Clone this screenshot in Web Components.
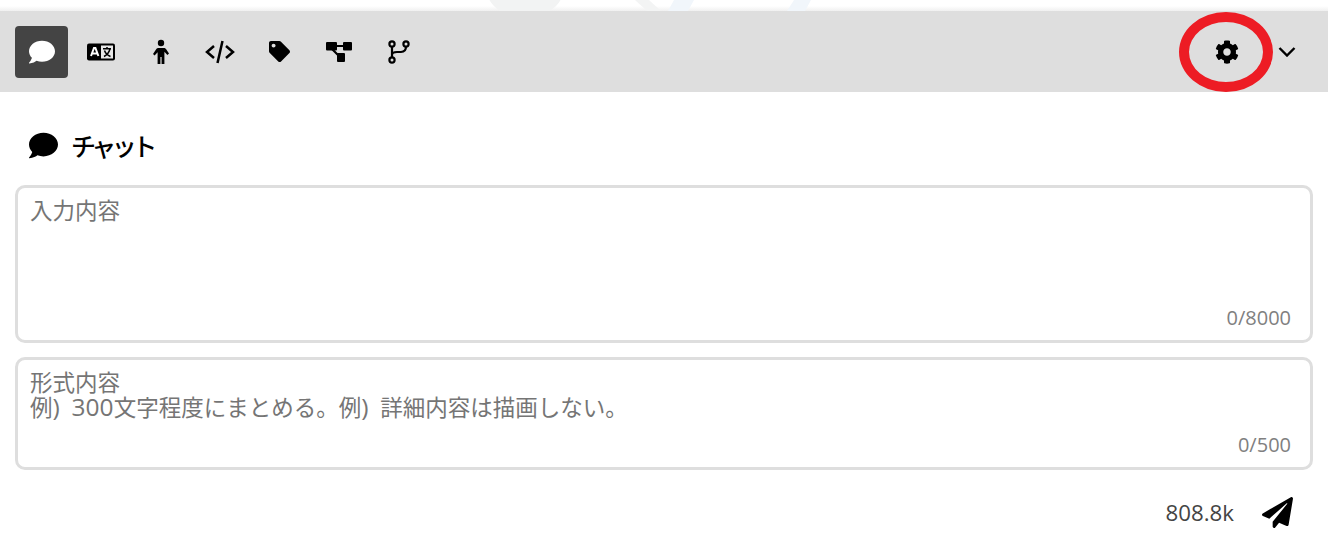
<!DOCTYPE html>
<html lang="ja">
<head>
<meta charset="utf-8">
<title>チャット</title>
<style>
html,body{margin:0;padding:0;background:#fff}
body{font-family:"Open Sans","Noto Sans CJK JP",sans-serif}
/* latin inside the placeholder runs a bit wider than the kana */
.lat{font-size:24.5px;word-spacing:5.5px;line-height:0}
</style>
</head>
<body>
<app-shell>
  <tool-bar slot="bar">
    <tool-btn active><svg viewBox="0 0 512 512" width="26" height="26" fill="#fff"><path d="M256 32C114.600 32 0 125.100 0 240c0 49.600 21.400 95 57 130.700C44.500 421.100 2.700 466 2.200 466.500c-2.200 2.300-2.800 5.700-1.500 8.700S4.800 480 8 480c66.300 0 116-31.800 140.600-51.400 32.700 12.300 69 19.400 107.400 19.400 141.400 0 256-93.100 256-208S397.400 32 256 32z"/></svg></tool-btn>
    <tool-btn><svg viewBox="0 0 30 20" width="30" height="20"><rect x="1" y="1.500" width="28" height="17" rx="2" fill="#000"/><rect x="15" y="3.500" width="12" height="13" fill="#e8e8e8"/><path d="M5 14l3-8h1.400l3 8M6.300 11.500h5.300" fill="none" stroke="#fff" stroke-width="2"/><path d="M17 6.800h8M21 5v2M18 14.500c3-1.500 5-4 6-7.500M18.500 8.500c1 3 3.500 5 6 6" fill="none" stroke="#000" stroke-width="1.500"/></svg></tool-btn>
    <tool-btn><svg viewBox="0 0 16 26" width="16" height="26"><circle cx="8" cy="4" r="3.200"/><path d="M5 9h6c1 0 1.500.5 2 1l3 4.500-1.600 1.500-3-3.300V25H8.600v-7H7.400v7H4.600V13.200L1.600 16.500 0 15l3-4.500c.5-.5 1-1.500 2-1.500z"/></svg></tool-btn>
    <tool-btn><svg viewBox="0 0 32 24" width="32" height="24" fill="none" stroke="#000" stroke-width="2.500"><path d="M10 6l-7 6 7 6M22 6l7 6-7 6M18.500 1l-5 22"/></svg></tool-btn>
    <tool-btn><svg viewBox="0 0 512 512" width="21" height="21"><path d="M0 252.118V48C0 21.490 21.490 0 48 0h204.118a48 48 0 0 1 33.941 14.059l211.882 211.882c18.745 18.745 18.745 49.137 0 67.882L293.823 497.941c-18.745 18.745-49.137 18.745-67.882 0L14.059 286.059A48 48 0 0 1 0 252.118zM112 64c-26.510 0-48 21.490-48 48s21.490 48 48 48 48-21.490 48-48-21.490-48-48-48z"/></svg></tool-btn>
    <tool-btn><svg viewBox="0 0 28 22" width="28" height="22"><rect x="1" y="1" width="11" height="8.500" rx="1"/><rect x="18" y="1" width="9" height="8.500" rx="1"/><rect x="12" y="12" width="8" height="9" rx="1"/><path d="M11 5h8M7 8l7 7" stroke="#000" stroke-width="2.200" fill="none"/></svg></tool-btn>
    <tool-btn><svg viewBox="0 0 24 26" width="24" height="26" fill="none" stroke="#000" stroke-width="2.200"><circle cx="5" cy="5" r="2.600"/><circle cx="19" cy="5" r="2.600"/><circle cx="5" cy="21" r="2.600"/><path d="M5 7.600v10.800M19 7.600c0 3.500-1.500 5.400-5 5.400h-4c-3 0-5 1-5 3"/></svg></tool-btn>
    <tool-btn slot="end" class="gear"><svg viewBox="0 0 512 512" width="24" height="24"><path d="M487.400 315.700l-42.600-24.600c4.300-23.200 4.300-47 0-70.200l42.600-24.600c4.900-2.800 7.100-8.600 5.500-14-11.100-35.600-30-67.800-54.700-94.600-3.800-4.100-10-5.100-14.800-2.300L380.800 110c-17.900-15.400-38.500-27.300-60.800-35.100V25.800c0-5.600-3.900-10.500-9.400-11.700-36.700-8.200-74.300-7.800-109.200 0-5.500 1.200-9.400 6.100-9.400 11.700V75c-22.200 7.900-42.800 19.800-60.800 35.100L88.700 85.500c-4.900-2.800-11-1.900-14.800 2.300-24.700 26.700-43.600 58.900-54.700 94.600-1.700 5.400.6 11.200 5.500 14L67.300 221c-4.300 23.200-4.300 47 0 70.200l-42.600 24.600c-4.900 2.800-7.100 8.600-5.500 14 11.100 35.600 30 67.800 54.700 94.600 3.800 4.100 10 5.100 14.800 2.300l42.600-24.600c17.900 15.400 38.500 27.300 60.800 35.100v49.200c0 5.600 3.900 10.500 9.400 11.700 36.700 8.200 74.300 7.800 109.200 0 5.500-1.200 9.400-6.100 9.400-11.700v-49.200c22.200-7.900 42.800-19.800 60.800-35.100l42.600 24.600c4.900 2.800 11 1.900 14.800-2.300 24.700-26.700 43.600-58.900 54.700-94.600 1.500-5.500-.7-11.300-5.600-14.100zM256 336c-44.100 0-80-35.900-80-80s35.900-80 80-80 80 35.900 80 80-35.900 80-80 80z"/></svg></tool-btn>
    <chevron-btn slot="end"></chevron-btn>
  </tool-bar>
  <chat-panel>
    <panel-title>チャット</panel-title>
    <text-box height="158" count="0/8000">入力内容</text-box>
    <text-box height="113" count="0/500">形式内容<br>例<span class="lat">) 300</span>文字程度にまとめる。例<span class="lat">) </span>詳細内容は描画しない。</text-box>
    <send-row>808.8k</send-row>
  </chat-panel>
</app-shell>
<script>
// small helper, every component is just a template string in its shadow root
function comp(name, html, setup) {
    customElements.define(name, class extends HTMLElement {
        connectedCallback() {
            if (this.shadowRoot) return;
            let root = this.attachShadow({ mode: 'open' });
            root.innerHTML = typeof html === 'function' ? html(this) : html;
            if (setup) setup(this, root);
        }
    });
}

comp('app-shell',
    `<style>
        :host{display:block;position:relative;width:1328px;height:545px;overflow:hidden;background:#fff}
        .top{height:11px;background:linear-gradient(#fff 0,#fff 6px,#f0f0f0 11px)}
        /* faint watermark behind the bar */
        .mark{position:absolute;left:460px;top:0}
        .ring{position:absolute;left:1179px;top:12px;width:94px;height:80px;box-sizing:border-box;border:10px solid #ed1c24;border-radius:50%}
    </style>
    <div class="top"></div>
    <svg class="mark" width="400" height="11" fill="none">
        <path d="M35 -14c0 30 60 30 60 0" stroke="#f2f3f3" stroke-width="18"/>
        <path d="M175 0l12 11h14l-12-11z" fill="#f3f4f4"/>
        <path d="M214 0l-6 11h20l6-11z" fill="#f1f6fb"/>
        <path d="M334 0l-7 11h18l6-11z" fill="#f1f6fb"/>
    </svg>
    <slot name="bar"></slot>
    <slot></slot>
    <div class="ring"></div>`);

comp('tool-bar',
    `<style>
        :host{display:flex;align-items:center;justify-content:space-between;height:81px;padding:0 28px 0 15px;box-sizing:border-box;background:#dedede}
        .group{display:flex;gap:6.500px;align-items:center}
        .end{display:flex;align-items:center;gap:21px}
    </style>
    <div class="group"><slot></slot></div>
    <div class="end"><slot name="end"></slot></div>`);

comp('tool-btn', el =>
    `<style>
        :host{display:flex;align-items:center;justify-content:center;width:53px;height:52px;border-radius:4px;box-sizing:border-box;background:${el.hasAttribute('active') ? '#444' : 'transparent'}}
    </style>
    <slot></slot>`);

comp('chevron-btn',
    `<style>
        :host{display:flex;align-items:center;justify-content:center;width:26px;height:52px}
    </style>
    <svg viewBox="0 0 18 10" width="18" height="10" fill="none" stroke="#000" stroke-width="2.400"><path d="M1.500 1l7.500 7.500L16.500 1"/></svg>`);

comp('chat-panel',
    `<style>
        :host{display:flex;flex-direction:column;padding:0 15px}
    </style>
    <slot></slot>`);

comp('panel-title',
    `<style>
        :host{display:flex;align-items:center;height:93px;box-sizing:border-box;padding:14px 0 0 14px;gap:13px;font-size:25px;font-weight:500;letter-spacing:-4.500px;color:#000;font-family:"Noto Sans CJK JP",sans-serif}
        svg{flex:none}
        span{position:relative;top:-1px}
    </style>
    <svg viewBox="0 0 512 512" width="29" height="29"><path d="M256 32C114.600 32 0 125.100 0 240c0 49.600 21.400 95 57 130.700C44.500 421.100 2.700 466 2.200 466.500c-2.200 2.300-2.800 5.700-1.500 8.700S4.800 480 8 480c66.300 0 116-31.800 140.600-51.400 32.700 12.300 69 19.400 107.400 19.400 141.400 0 256-93.100 256-208S397.400 32 256 32z"/></svg>
    <span><slot></slot></span>`);

comp('text-box', el =>
    `<style>
        :host{display:block;position:relative;height:${el.getAttribute('height')}px;margin-bottom:14px;box-sizing:border-box;border:3px solid #dedede;border-radius:10px;padding:10px 12px;background:#fff}
        .ph{font-size:22.500px;line-height:25px;color:#757575}
        .count{position:absolute;right:19px;bottom:9px;font-size:20px;line-height:26px;color:#808080}
    </style>
    <div class="ph"><slot></slot></div>
    <div class="count">${el.getAttribute('count')}</div>`);

comp('send-row',
    `<style>
        :host{display:flex;justify-content:flex-end;align-items:center;gap:28px;height:60px;margin-top:-2px;padding-right:20px;font-size:22.300px;color:#444}
    </style>
    <span><slot></slot></span>
    <svg viewBox="0 0 512 512" width="31" height="31"><path d="M476 3.200L12.500 270.600c-18.100 10.400-15.800 35.600 2.200 43.200L121 358.400l287.300-253.200c5.500-4.900 13.300 2.600 8.600 8.300L176 407v80.500c0 23.600 28.500 32.900 42.500 15.800L282 426l124.600 52.200c14.200 6 30.400-2.900 33-18.200l72-432C515 7.800 493.300-6.800 476 3.200z"/></svg>`);
</script>
</body>
</html>
